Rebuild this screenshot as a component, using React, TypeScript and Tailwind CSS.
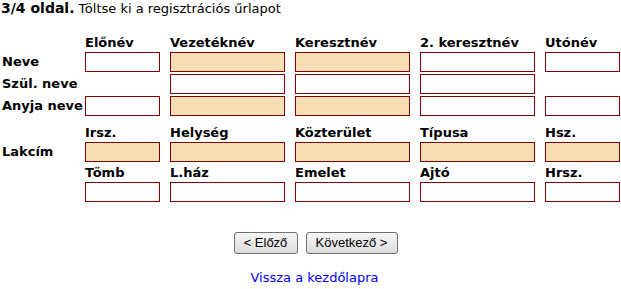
import React from 'react';

const font = { fontFamily: '"DejaVu Sans", Verdana, sans-serif' };

type Cell = { fill?: boolean; empty?: boolean };

const widths = [75, 115, 115, 115, 75];

function Field({ fill, w }: { fill?: boolean; w: number }) {
  return (
    <input
      type="text"
      className={`h-[20px] border border-[#800000] outline-none ${fill ? 'bg-[#f5deb3]' : 'bg-white'}`}
      style={{ width: w }}
    />
  );
}

function LabelRow({ labels }: { labels: string[] }) {
  return (
    <div className="flex h-[16px] leading-[16px]">
      <div className="w-[85px]" />
      <div className="flex gap-[10px]">
        {labels.map((l, i) => (
          <div key={l} className="font-bold" style={{ width: widths[i] }}>
            {l}
          </div>
        ))}
      </div>
    </div>
  );
}

function InputRow({ label, cells }: { label?: string; cells: Cell[] }) {
  return (
    <div className="flex h-[20px] items-center">
      <div className="w-[85px] pl-[2px] font-bold">{label}</div>
      <div className="flex gap-[10px]">
        {cells.map((c, i) =>
          c.empty ? (
            <div key={i} style={{ width: widths[i] }} />
          ) : (
            <Field key={i} fill={c.fill} w={widths[i]} />
          )
        )}
      </div>
    </div>
  );
}

export default function App() {
  return (
    <div className="w-[621px] h-[289px] bg-white text-[13px] text-black" style={font}>
      <div className="h-[19px] pl-[1px] leading-[17px] text-[13px]">
        <b className="text-[14px]">3/4 oldal.</b> Töltse ki a regisztrációs űrlapot
      </div>

      <div className="mt-[16px]">
        <LabelRow labels={['Előnév', 'Vezetéknév', 'Keresztnév', '2. keresztnév', 'Utónév']} />
        <div className="mt-[1px] flex flex-col gap-[2px]">
          <InputRow label="Neve" cells={[{}, { fill: true }, { fill: true }, {}, {}]} />
          <InputRow label="Szül. neve" cells={[{ empty: true }, {}, {}, {}, { empty: true }]} />
          <InputRow label="Anyja neve" cells={[{}, { fill: true }, { fill: true }, {}, {}]} />
        </div>

        <div className="mt-[9px]">
          <LabelRow labels={['Irsz.', 'Helység', 'Közterület', 'Típusa', 'Hsz.']} />
          <div className="mt-[1px]">
            <InputRow
              label="Lakcím"
              cells={[{ fill: true }, { fill: true }, { fill: true }, { fill: true }, { fill: true }]}
            />
          </div>
          <div className="mt-[3px]">
            <LabelRow labels={['Tömb', 'L.ház', 'Emelet', 'Ajtó', 'Hrsz.']} />
          </div>
          <div className="mt-[1px]">
            <InputRow cells={[{}, {}, {}, {}, {}]} />
          </div>
        </div>
      </div>

      <div className="mt-[30px] flex justify-center gap-[8px] pl-[10px]">
        <button
          className="h-[22px] w-[64px] rounded-[3px] border border-[#707070] bg-gradient-to-b from-[#f6f6f6] to-[#dcdcdc] text-[13px] leading-[20px]"
          style={{ fontFamily: '"Liberation Sans", Arial, sans-serif' }}
        >
          &lt; Előző
        </button>
        <button
          className="h-[22px] w-[92px] rounded-[3px] border border-[#707070] bg-gradient-to-b from-[#f6f6f6] to-[#dcdcdc] text-[13px] leading-[20px]"
          style={{ fontFamily: '"Liberation Sans", Arial, sans-serif' }}
        >
          Következő &gt;
        </button>
      </div>

      <div className="mt-[16px] flex justify-center pl-[8px]">
        <a href="#" className="text-[#0000ff] leading-[16px]">
          Vissza a kezdőlapra
        </a>
      </div>
    </div>
  );
}
